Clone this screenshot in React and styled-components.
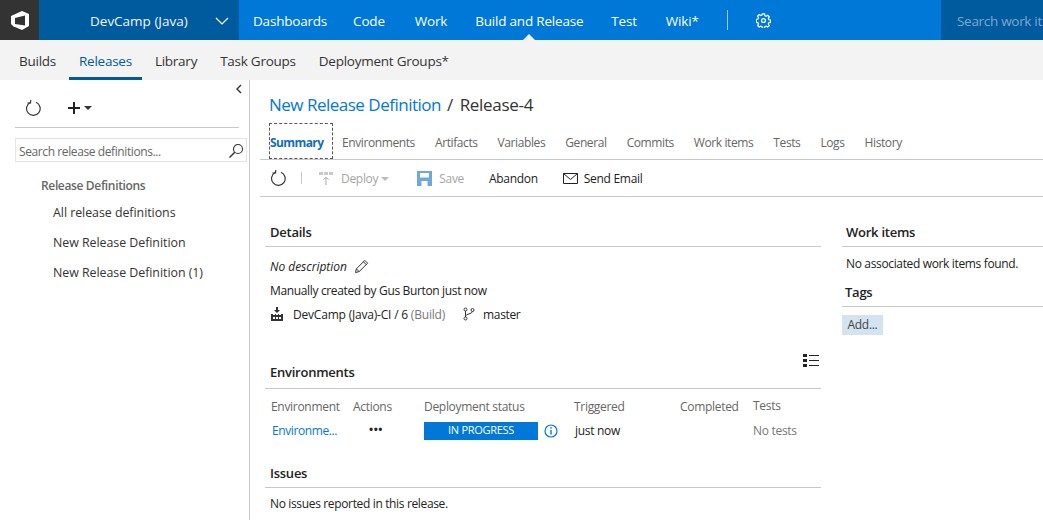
import React from "react";
import styled, { createGlobalStyle } from "styled-components";

const Global = createGlobalStyle`
  html, body { margin: 0; padding: 0; background: #fff; }
  body { font-family: "Open Sans", "Noto Sans", sans-serif; font-size: 12px; color: #222; letter-spacing: -0.3px; }
  * { box-sizing: border-box; }
`;

const Page = styled.div`width: 1043px; height: 520px; overflow: hidden; display: flex; flex-direction: column;`;

const TopBar = styled.header`height: 40px; display: flex; background: #0078d7; color: #fff; flex: none;`;
const LogoBox = styled.div`width: 39px; background: #333; display: flex; align-items: center; justify-content: center;`;
const Project = styled.div`width: 200px; background: #005a9e; display: flex; align-items: center; padding: 1px 0 0 51px; font-size: 13.5px; letter-spacing: 0; color: #f2f7fb; gap: 27px;`;
const Nav = styled.nav`display: flex; align-items: center; margin-left: 14px; flex: 1;`;
const NavItem = styled.a`position: relative; font-size: 13.5px; letter-spacing: -0.2px; margin-right: ${p => p.$mr || 28}px; height: 40px; line-height: 42px; white-space: nowrap;
  ${p => p.$active && `&::after { content: ""; position: absolute; left: 50%; bottom: 0; margin-left: -6px; border: 6px solid transparent; border-top: 0; border-bottom-color: #f3f3f3; }`}`;
const Sep = styled.span`width: 1px; height: 20px; background: #9ccaf0; margin-right: 28px;`;
const Search = styled.div`width: 102px; background: #005a9e; color: #7fa9cc; font-size: 13.5px; line-height: 42px; padding-left: 16px; white-space: nowrap; overflow: hidden; flex: none;`;

const SubBar = styled.div`height: 40px; background: #f3f3f3; display: flex; padding-left: 9px; flex: none;`;
const SubTab = styled.a`padding: 0 10px; margin-right: 3px; line-height: 42px; font-size: 13.5px; letter-spacing: -0.25px; color: ${p => p.$active ? "#005a9e" : "#333"};
  border-bottom: 3px solid ${p => p.$active ? "#005a9e" : "transparent"}; white-space: nowrap;`;

const Body = styled.div`flex: 1; display: flex; min-height: 0;`;
const Side = styled.aside`width: 250px; border-right: 1px solid #c8c8c8; padding: 0 2px 0 15px; flex: none; position: relative;`;
const Collapse = styled.div`position: absolute; right: 7px; top: 4px; line-height: 0;`;
const SideTools = styled.div`height: 48px; width: 224px; border-bottom: 1px solid #c8c8c8; display: flex; align-items: center; padding: 8px 0 0 10px; gap: 26px;`;
const PlusGroup = styled.div`display: flex; align-items: center; gap: 0;`;
const SearchBox = styled.div`margin-top: 10px; height: 24px; border: 1px solid #e4e4e4; width: 232px; display: flex; align-items: center; justify-content: space-between; padding: 2px 2px 0 3px; color: #666; letter-spacing: -0.4px;`;
const TreeHead = styled.div`margin: 16px 0 0 26px; height: 16px; line-height: 16px; font-weight: 600; color: #666; letter-spacing: -0.35px;`;
const TreeItem = styled.div`margin-left: 38px; height: 30px; line-height: 30px; font-size: 12.4px; letter-spacing: -0.04px; color: #333; white-space: nowrap;`;
const TreeFirst = styled(TreeItem)`margin-top: 4px;`;

const Main = styled.main`flex: 1; min-width: 0; padding-left: 10px;`;
const Title = styled.div`height: 44px; padding: 12px 0 0 9px; font-size: 17px; letter-spacing: -0.5px; line-height: 26px; color: #333; white-space: nowrap;`;
const TitleLink = styled.a`color: #0078d7; margin-right: 6px;`;
const TitleSlash = styled.span`margin-right: 7px;`;
const TitleName = styled.span`letter-spacing: -0.3px;`;
const Tabs = styled.div`height: 36px; border-bottom: 1px solid #c8c8c8; display: flex; padding-left: 10px; gap: 20px; align-items: flex-start;`;
const Tab = styled.a`height: 34px; line-height: 37px; color: ${p => p.$active ? "#106ebe" : "#666"}; font-weight: ${p => p.$active ? 700 : 400}; letter-spacing: -0.4px;
  ${p => p.$active && "outline: 1px dashed #555; width: 62px; margin-right: -10px; letter-spacing: -0.6px;"} white-space: nowrap;`;
const Toolbar = styled.div`height: 37px; border-bottom: 1px solid #c8c8c8; display: flex; align-items: center; padding-left: 10px; white-space: nowrap;`;
const ToolSep = styled.span`width: 1px; height: 12px; background: #c8c8c8; margin: 0 17px 0 15px;`;
const ToolBtn = styled.div`display: flex; align-items: center; gap: ${p => p.$gap || 6}px; margin-right: ${p => p.$mr || 0}px; color: ${p => p.$off ? "#a6a6a6" : "#222"};`;
const Caret = styled.span`display: inline-block; vertical-align: middle; margin-left: 3px; border: 4px solid transparent; border-bottom: 0; border-top: 4px solid ${p => p.$c || "#333"};`;

const Columns = styled.div`display: flex; padding-left: 5px;`;
const LeftCol = styled.div`width: 556px; flex: none;`;
const RightCol = styled.div`flex: 1; margin-left: 21px; min-width: 0;`;
const Heading = styled.div`height: ${p => p.$h || 25}px; margin-top: ${p => p.$mt || 0}px; border-bottom: 1px solid #c8c8c8; padding-left: ${p => p.$pl ?? 5}px; font-size: 13px; letter-spacing: -0.25px; font-weight: 600; line-height: 20px; color: #222; position: relative;`;
const ListIcon = styled.div`position: absolute; right: 2px; top: -8px; line-height: 0;`;
const Line = styled.div`padding-left: ${p => p.$pl ?? 5}px; height: ${p => p.$h || 24}px; margin-top: ${p => p.$mt || 0}px; display: flex; align-items: center; white-space: nowrap; font-style: ${p => p.$it ? "italic" : "normal"}; letter-spacing: ${p => p.$it ? "-0.02px" : "-0.35px"};`;
const Muted = styled.span`color: #777;`;
const Row = styled.span`display: inline-flex; align-items: center; gap: ${p => p.$gap || 6}px; margin-right: ${p => p.$mr || 0}px;`;
const BuildText = styled.span`margin-left: 2px; letter-spacing: -0.2px;`;
const Table = styled.div`display: grid; grid-template-columns: 82px 71px 150px 106px 73px 1fr; padding: 5px 0 0 6px; height: 66px; grid-template-rows: 24px 24px; align-items: center; white-space: nowrap;`;
const Th = styled.div`color: #666; margin-top: ${p => p.$up ? -2 : 0}px;`;
const EnvLink = styled.a`color: #0078d7; padding-left: 1px; letter-spacing: -0.4px;`;
const Dots = styled.div`font-weight: 700; font-size: 11px; padding-left: 16px; color: #222; letter-spacing: 0.5px; line-height: 10px; margin-top: -3px;`;
const StatusCell = styled.div`display: flex; align-items: center; gap: 6px; margin-top: 2px;`;
const Status = styled.div`width: 114px; height: 18px; background: #0078d7; color: #fff; font-size: 11px; line-height: 16px; text-align: center;`;
const JustNow = styled.div`padding-left: 1px;`;
const AddBtn = styled.div`width: 41px; height: 20px; background: #d4e3f0; color: #444; line-height: 20px; text-align: center; margin-top: 8px;`;

const Refresh = () => (
  <svg width="16" height="16" viewBox="0 0 16 16" fill="none" stroke="#333" strokeWidth="1.15">
    <path d="M5.300 2.500A6.800 6.800 0 1 0 11 2.300" />
    <path d="M5.800 0 5.500 3 2.400 3" />
  </svg>
);
const Gear = () => (
  <svg width="15" height="15" viewBox="0 0 16 16" fill="none" stroke="#fff" strokeWidth="1.3">
    <circle cx="8" cy="8" r="2.100" />
    <path d="M6.800 1h2.400l.4 1.900 1.300.6 1.700-1 1.600 1.700-1 1.600.6 1.400 1.700.4v2.400l-1.800.4-.6 1.300 1 1.700-1.600 1.600-1.700-1-1.300.6-.4 1.800H6.800l-.4-1.800-1.400-.6-1.600 1-1.700-1.600 1-1.700-.6-1.300-1.800-.4V6.800l1.800-.4.6-1.400-1-1.600 1.700-1.700 1.600 1 1.400-.6z" />
  </svg>
);

export default function App() {
  return (
    <Page>
      <Global />
      <TopBar>
        <LogoBox>
          <svg width="18" height="19" viewBox="0 0 18 19" fill="#fff">
            <path fillRule="evenodd" d="M11 0 18 3V15L11 19 4 16H3L0 13V5ZM4 7 14 4.500V14.500L4 13Z" />
          </svg>
        </LogoBox>
        <Project>
          DevCamp (Java)
          <svg width="14" height="8" viewBox="0 0 14 8" fill="none" stroke="#fff" strokeWidth="1.2"><path d="M1 1l6 6 6-6" /></svg>
        </Project>
        <Nav>
          <NavItem $mr={26}>Dashboards</NavItem>
          <NavItem $mr={30}>Code</NavItem>
          <NavItem>Work</NavItem>
          <NavItem $active>Build and Release</NavItem>
          <NavItem $mr={29}>Test</NavItem>
          <NavItem>Wiki*</NavItem>
          <Sep />
          <Gear />
        </Nav>
        <Search>Search work it</Search>
      </TopBar>
      <SubBar>
        <SubTab>Builds</SubTab>
        <SubTab $active>Releases</SubTab>
        <SubTab>Library</SubTab>
        <SubTab>Task Groups</SubTab>
        <SubTab>Deployment Groups*</SubTab>
      </SubBar>
      <Body>
        <Side>
          <Collapse>
            <svg width="6" height="10" viewBox="0 0 6 10" fill="none" stroke="#333" strokeWidth="1.4"><path d="M5 1 1 5l4 4" /></svg>
          </Collapse>
          <SideTools>
            <Refresh />
            <PlusGroup>
              <svg width="14" height="14" viewBox="0 0 14 14" stroke="#222" strokeWidth="2"><path d="M7 1v12M1 7h12" /></svg>
              <Caret />
            </PlusGroup>
          </SideTools>
          <SearchBox>
            Search release definitions...
            <svg width="16" height="16" viewBox="0 0 16 16" fill="none" stroke="#333" strokeWidth="1.1"><circle cx="10" cy="6" r="4.500" /><path d="M6.800 9.200 1.500 14.500" strokeWidth="1.500" /></svg>
          </SearchBox>
          <TreeHead>Release Definitions</TreeHead>
          <TreeFirst>All release definitions</TreeFirst>
          <TreeItem>New Release Definition</TreeItem>
          <TreeItem>New Release Definition (1)</TreeItem>
        </Side>
        <Main>
          <Title><TitleLink>New Release Definition</TitleLink><TitleSlash>/</TitleSlash><TitleName>Release-4</TitleName></Title>
          <Tabs>
            <Tab $active>Summary</Tab>
            <Tab>Environments</Tab>
            <Tab>Artifacts</Tab>
            <Tab>Variables</Tab>
            <Tab>General</Tab>
            <Tab>Commits</Tab>
            <Tab>Work items</Tab>
            <Tab>Tests</Tab>
            <Tab>Logs</Tab>
            <Tab>History</Tab>
          </Tabs>
          <Toolbar>
            <Refresh />
            <ToolSep />
            <ToolBtn $off $mr={28} $gap={7}>
              <svg width="15" height="15" viewBox="0 0 15 15" fill="#bbb"><path d="M0 1h4v3H0zM5 1h4v3H5zM10 1h4v3h-4z" opacity=".8" /><path d="M7 14V6.500M4.500 8.700 7 6.200l2.500 2.500" fill="none" stroke="#aaa" /></svg>
              <span>Deploy<Caret $c="#bbb" /></span>
            </ToolBtn>
            <ToolBtn $off $mr={25} $gap={7}>
              <svg width="15" height="15" viewBox="0 0 15 15"><path fill="#6ea8dc" d="M0 0h15v15H0z" /><path fill="#fff" d="M3 2h9v4.500H3zM4.500 10h6v5h-6z" /></svg>
              Save
            </ToolBtn>
            <ToolBtn $mr={25}>Abandon</ToolBtn>
            <ToolBtn $gap={6}>
              <svg width="15" height="11" viewBox="0 0 15 11" fill="none" stroke="#222"><path d="M.5.500h14v10H.5zM.5.500l7 6 7-6" /></svg>
              Send Email
            </ToolBtn>
          </Toolbar>
          <Columns>
            <LeftCol>
              <Heading $mt={25}>Details</Heading>
              <Line $it $mt={7}>
                <Row $gap={7}>No description
                  <svg width="15" height="15" viewBox="0 0 15 15" fill="none" stroke="#333"><path d="M1.500 13.500 2.400 9.800 10.800 1.400l2.800 2.800-8.400 8.400zM2.400 9.800 5.200 12.600M9.400 2.800l2.800 2.800" /></svg>
                </Row>
              </Line>
              <Line>Manually created by Gus Burton just now</Line>
              <Line>
                <Row $gap={7} $mr={18}>
                  <svg width="14" height="14" viewBox="0 0 14 14" fill="#333"><path fillRule="evenodd" d="M6 0h2v3h2L7 6 4 3h2zM1 7h2v1h2V7h1v1h2V7h1v1h2V7h2v7H1zM3 10v2h2v-2zM6 10v2h2v-2zM9 10v2h2v-2z" /></svg>
                  <BuildText>DevCamp (Java)-CI / 6 <Muted>(Build)</Muted></BuildText>
                </Row>
                <Row $gap={8}>
                  <svg width="12" height="14" viewBox="0 0 12 14" fill="none" stroke="#333"><circle cx="2.500" cy="2.500" r="1.500" /><circle cx="2.500" cy="11.500" r="1.500" /><circle cx="9.500" cy="3" r="1.500" /><path d="M2.500 4v6M2.500 9C3 6.500 9 7.500 9.500 4.500" /></svg>
                  master
                </Row>
              </Line>
              <Heading $mt={36} $h={27}>
                Environments
                <ListIcon>
                  <svg width="16" height="13" viewBox="0 0 16 13" fill="#222"><path d="M0 0h4v3H0zM0 5h4v3H0zM0 10h4v3H0zM6 1h10v1H6zM6 6h10v1H6zM6 11h10v1H6z" /></svg>
                </ListIcon>
              </Heading>
              <Table>
                <Th>Environment</Th><Th>Actions</Th><Th>Deployment status</Th><Th>Triggered</Th><Th>Completed</Th><Th $up>Tests</Th>
                <EnvLink>Environme...</EnvLink>
                <Dots>•••</Dots>
                <StatusCell>
                  <Status>IN PROGRESS</Status>
                  <svg width="14" height="14" viewBox="0 0 14 14" fill="none" stroke="#0078d7"><circle cx="7" cy="7" r="6" strokeWidth="1.200" /><path d="M7 6v4.500" strokeWidth="1.400" /><path d="M7 3.200v1.500" strokeWidth="1.400" /></svg>
                </StatusCell>
                <JustNow>just now</JustNow>
                <div />
                <Muted>No tests</Muted>
              </Table>
              <Heading $mt={8}>Issues</Heading>
              <Line $h={30}>No issues reported in this release.</Line>
            </LeftCol>
            <RightCol>
              <Heading $mt={25} $pl={4}>Work items</Heading>
              <Line $pl={4} $h={33}>No associated work items found.</Line>
              <Heading $mt={2} $pl={3}>Tags</Heading>
              <AddBtn>Add...</AddBtn>
            </RightCol>
          </Columns>
        </Main>
      </Body>
    </Page>
  );
}
